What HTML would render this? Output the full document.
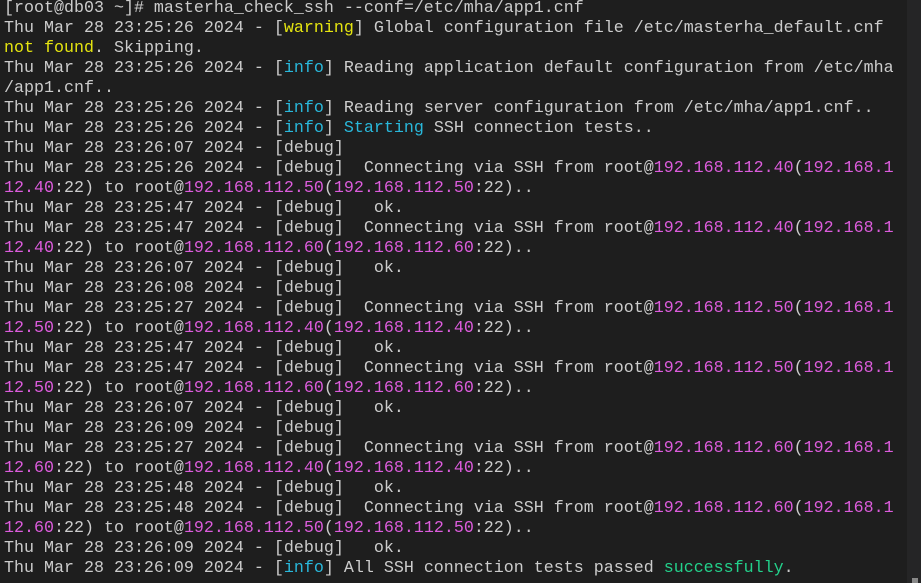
<!DOCTYPE html>
<html><head><meta charset="utf-8"><style>
html,body{margin:0;padding:0;background:#1e1e1e;width:921px;height:583px;overflow:hidden}
pre{margin:0;position:absolute;left:4px;top:-1px;font-family:"Liberation Mono","DejaVu Sans Mono",monospace;font-size:16.66px;line-height:20px;color:#cccccc;white-space:pre}
.y{color:#e5e510}.c{color:#29b8db}.m{color:#dc5cdc}.g{color:#23d18b}
.sb{position:absolute;right:0;top:0;width:14px;height:583px;background:#252526}
.cur{position:absolute;left:912px;top:578px;width:6px;height:5px;background:#888}
</style></head><body>
<div class="sb"></div><div class="cur"></div>
<pre>[root@db03 ~]# masterha_check_ssh --conf=/etc/mha/app1.cnf
Thu Mar 28 23:25:26 2024 - [<span class="y">warning</span>] Global configuration file /etc/masterha_default.cnf
<span class="y">not found</span>. Skipping.
Thu Mar 28 23:25:26 2024 - [<span class="c">info</span>] Reading application default configuration from /etc/mha
/app1.cnf..
Thu Mar 28 23:25:26 2024 - [<span class="c">info</span>] Reading server configuration from /etc/mha/app1.cnf..
Thu Mar 28 23:25:26 2024 - [<span class="c">info</span>] <span class="c">Starting</span> SSH connection tests..
Thu Mar 28 23:26:07 2024 - [debug]
Thu Mar 28 23:25:26 2024 - [debug]  Connecting via SSH from root@<span class="m">192.168.112.40</span>(<span class="m">192.168.1
12.40</span>:22) to root@<span class="m">192.168.112.50</span>(<span class="m">192.168.112.50</span>:22)..
Thu Mar 28 23:25:47 2024 - [debug]   ok.
Thu Mar 28 23:25:47 2024 - [debug]  Connecting via SSH from root@<span class="m">192.168.112.40</span>(<span class="m">192.168.1
12.40</span>:22) to root@<span class="m">192.168.112.60</span>(<span class="m">192.168.112.60</span>:22)..
Thu Mar 28 23:26:07 2024 - [debug]   ok.
Thu Mar 28 23:26:08 2024 - [debug]
Thu Mar 28 23:25:27 2024 - [debug]  Connecting via SSH from root@<span class="m">192.168.112.50</span>(<span class="m">192.168.1
12.50</span>:22) to root@<span class="m">192.168.112.40</span>(<span class="m">192.168.112.40</span>:22)..
Thu Mar 28 23:25:47 2024 - [debug]   ok.
Thu Mar 28 23:25:47 2024 - [debug]  Connecting via SSH from root@<span class="m">192.168.112.50</span>(<span class="m">192.168.1
12.50</span>:22) to root@<span class="m">192.168.112.60</span>(<span class="m">192.168.112.60</span>:22)..
Thu Mar 28 23:26:07 2024 - [debug]   ok.
Thu Mar 28 23:26:09 2024 - [debug]
Thu Mar 28 23:25:27 2024 - [debug]  Connecting via SSH from root@<span class="m">192.168.112.60</span>(<span class="m">192.168.1
12.60</span>:22) to root@<span class="m">192.168.112.40</span>(<span class="m">192.168.112.40</span>:22)..
Thu Mar 28 23:25:48 2024 - [debug]   ok.
Thu Mar 28 23:25:48 2024 - [debug]  Connecting via SSH from root@<span class="m">192.168.112.60</span>(<span class="m">192.168.1
12.60</span>:22) to root@<span class="m">192.168.112.50</span>(<span class="m">192.168.112.50</span>:22)..
Thu Mar 28 23:26:09 2024 - [debug]   ok.
Thu Mar 28 23:26:09 2024 - [<span class="c">info</span>] All SSH connection tests passed <span class="g">successfully</span>.</pre>
</body></html>
